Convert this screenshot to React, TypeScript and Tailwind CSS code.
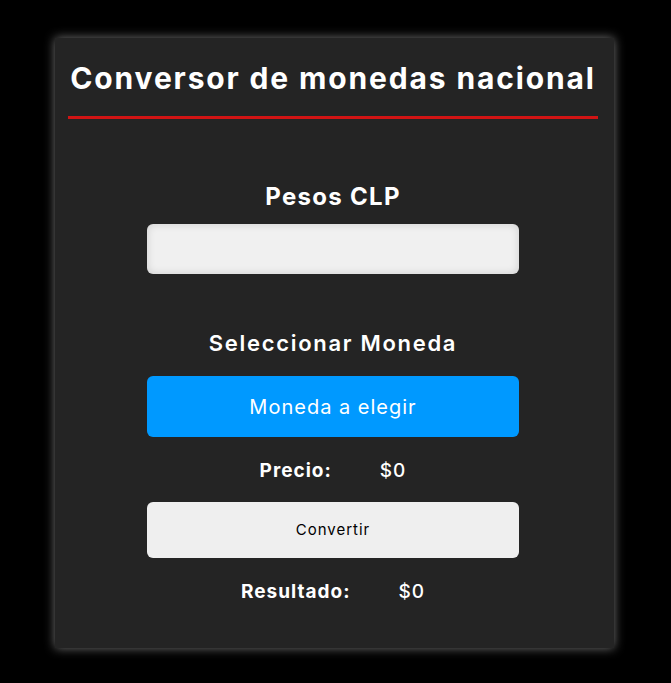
import React from 'react';

const App: React.FC = () => {
    return (
        <div className="min-h-[683px] w-full bg-black pt-[38px] font-['Inter','Liberation_Sans',sans-serif]">
            <div className="ml-[55px] w-[559px] bg-[#242424] pb-[42px] pl-[13px] pr-[16px] pt-[16px] shadow-[0_0_10px_rgba(255,255,255,0.45)]">
                <h1 className="whitespace-nowrap text-center text-[30px] font-bold leading-[48px] tracking-[1.85px] text-white">
                    Conversor de monedas nacional
                </h1>
                <div className="mt-[14px] h-[3px] w-full bg-[#d11414]"></div>

                <div className="mx-auto mt-[62px] flex w-[372px] flex-col items-center">
                    <h2 className="text-[24px] font-bold leading-[32px] tracking-[1.3px] text-white">Pesos CLP</h2>
                    <input
                        type="text"
                        className="mt-[11px] h-[50px] w-full rounded-[6px] bg-[#f0f0f0] px-3 shadow-[inset_0_0_8px_rgba(0,0,0,0.15)] outline-none"
                    />

                    <h2 className="mt-[54px] text-[22px] font-semibold leading-[30px] tracking-[1.7px] text-white">Seleccionar Moneda</h2>
                    <button className="mt-[18px] h-[61px] w-full rounded-[6px] bg-[#0099ff] text-[20px] font-normal tracking-[1px] text-white">
                        Moneda a elegir
                    </button>

                    <div className="mt-[20px] flex items-center justify-center gap-12 text-[19px] leading-[28px] tracking-[1px] text-white">
                        <span className="font-bold">Precio:</span>
                        <span className="font-medium">$0</span>
                    </div>

                    <button className="mt-[17px] h-[56px] w-full rounded-[6px] bg-[#efefef] text-[15px] tracking-[1px] text-black">
                        Convertir
                    </button>

                    <div className="mt-[20px] flex items-center justify-center gap-12 text-[19px] leading-[28px] tracking-[1px] text-white">
                        <span className="font-bold">Resultado:</span>
                        <span className="font-medium">$0</span>
                    </div>
                </div>
            </div>
        </div>
    );
};

export default App;
